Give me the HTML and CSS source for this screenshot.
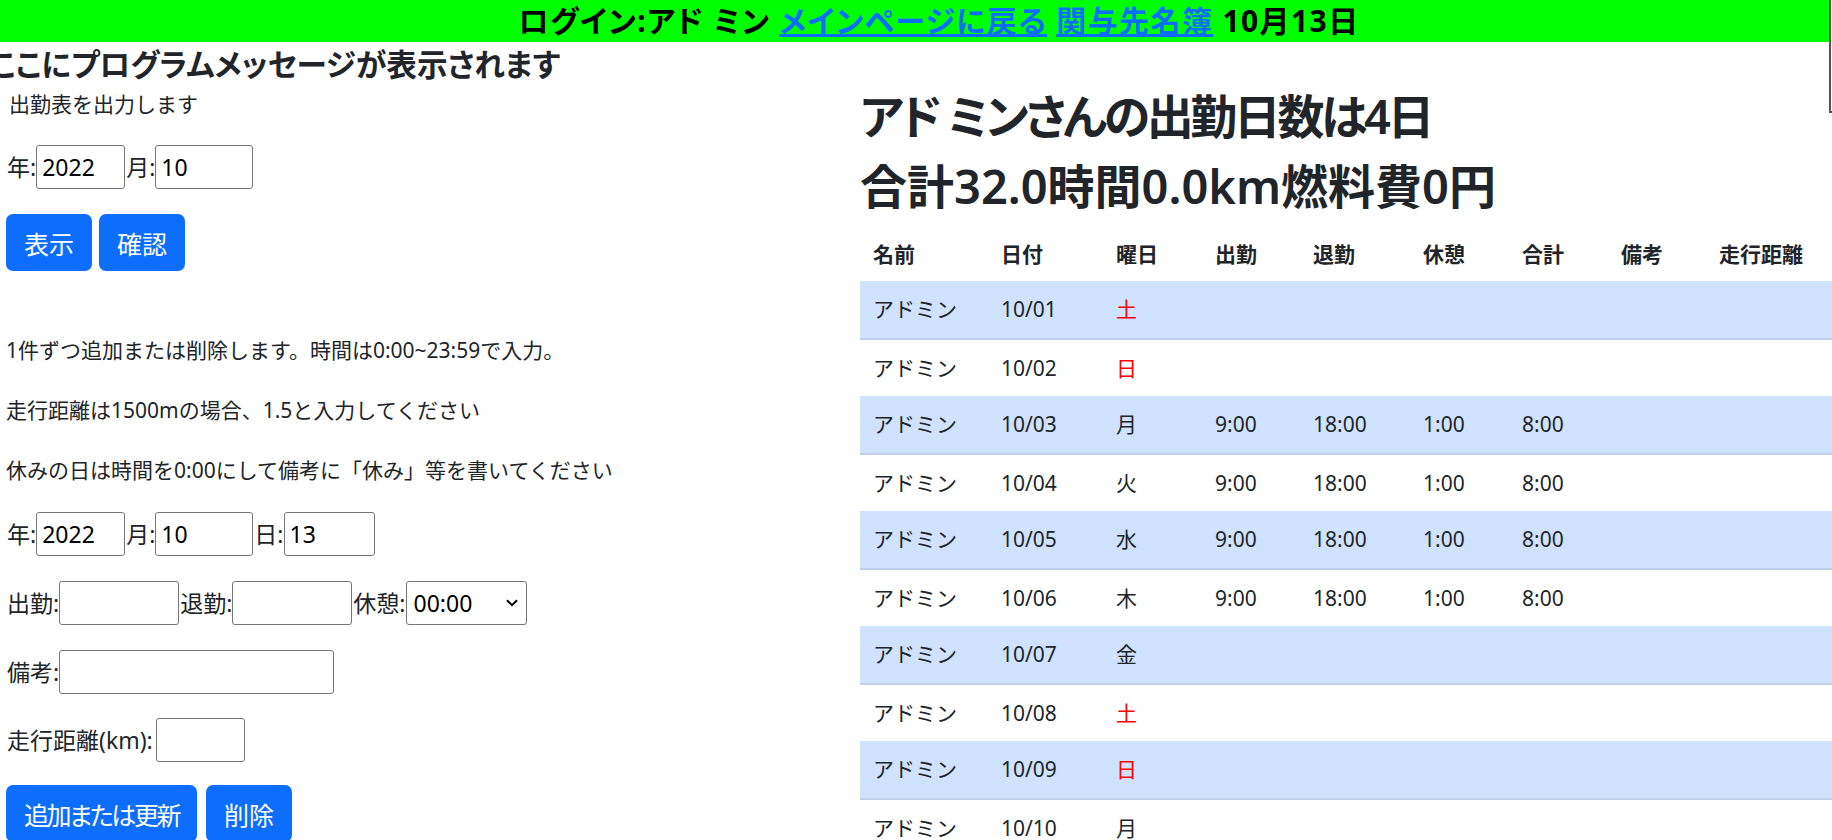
FILE: index.html
```html
<!DOCTYPE html>
<html lang="ja">
<head>
<meta charset="utf-8">
<title>出勤表</title>
<link rel="stylesheet" href="styles.css">
</head>
<body>
<div class="topbar">ログイン:アド ミン <a href="#">メインページに戻る</a> <a href="#">関与先名簿</a> 10月13日</div>
<div class="corner"></div>
<div class="page">
  <div class="left">
    <h4 class="msg">ここにプログラムメッセージが表示されます</h4>
    <div class="intro">出勤表を出力します</div>
    <div class="frow r1"><span class="lbl">年:</span><input class="w89" value="2022"><span class="lbl">月:</span><input class="w98" value="10"></div>
    <div class="btns"><button class="btn">表示</button><button class="btn">確認</button></div>
    <div class="notes">
      <p>1件ずつ追加または削除します。時間は0:00~23:59で入力。</p>
      <p>走行距離は1500mの場合、1.5と入力してください</p>
      <p>休みの日は時間を0:00にして備考に「休み」等を書いてください</p>
    </div>
    <div class="frow r-date"><span class="lbl">年:</span><input class="w89" value="2022"><span class="lbl">月:</span><input class="w98" value="10"><span class="lbl">日:</span><input class="w91" value="13"></div>
    <div class="frow"><span class="lbl">出勤:</span><input class="w120" value=""><span class="lbl">退勤:</span><input class="w120" value=""><span class="lbl">休憩:</span><span class="sel"><select><option>00:00</option></select><svg class="chev" viewBox="0 0 12 8"><path d="M1 1.2 L6 6.2 L11 1.2"/></svg></span></div>
    <div class="frow"><span class="lbl">備考:</span><input class="w275" value=""></div>
    <div class="frow r-km"><span class="lbl lbl-km">走行距離(km):</span><input class="w89" value=""></div>
    <div class="btns b2"><button class="btn btn-tight">追加または更新</button><button class="btn">削除</button></div>
  </div>
  <div class="right">
    <h1 class="big big-kana">アド ミンさんの出勤日数は4日</h1>
    <h1 class="big">合計32.0時間0.0km燃料費0円</h1>
    <table class="att">
      <thead>
        <tr><th>名前</th><th>日付</th><th>曜日</th><th>出勤</th><th>退勤</th><th>休憩</th><th>合計</th><th>備考</th><th>走行距離</th></tr>
      </thead>
      <tbody>
        <tr><td>アドミン</td><td>10/01</td><td class="hol">土</td><td></td><td></td><td></td><td></td><td></td><td></td></tr>
        <tr><td>アドミン</td><td>10/02</td><td class="hol">日</td><td></td><td></td><td></td><td></td><td></td><td></td></tr>
        <tr><td>アドミン</td><td>10/03</td><td>月</td><td>9:00</td><td>18:00</td><td>1:00</td><td>8:00</td><td></td><td></td></tr>
        <tr><td>アドミン</td><td>10/04</td><td>火</td><td>9:00</td><td>18:00</td><td>1:00</td><td>8:00</td><td></td><td></td></tr>
        <tr><td>アドミン</td><td>10/05</td><td>水</td><td>9:00</td><td>18:00</td><td>1:00</td><td>8:00</td><td></td><td></td></tr>
        <tr><td>アドミン</td><td>10/06</td><td>木</td><td>9:00</td><td>18:00</td><td>1:00</td><td>8:00</td><td></td><td></td></tr>
        <tr><td>アドミン</td><td>10/07</td><td>金</td><td></td><td></td><td></td><td></td><td></td><td></td></tr>
        <tr><td>アドミン</td><td>10/08</td><td class="hol">土</td><td></td><td></td><td></td><td></td><td></td><td></td></tr>
        <tr><td>アドミン</td><td>10/09</td><td class="hol">日</td><td></td><td></td><td></td><td></td><td></td><td></td></tr>
        <tr><td>アドミン</td><td>10/10</td><td>月</td><td></td><td></td><td></td><td></td><td></td><td></td></tr>
      </tbody>
    </table>
  </div>
</div>
</body>
</html>
```
FILE: styles.css
```css
html, body {
  margin: 0;
  padding: 0;
}
body {
  font-family: "Noto Sans", "Noto Sans CJK JP", sans-serif;
  font-size: 21px;
  line-height: 30px;
  color: #212529;
  background: #fff;
  overflow: hidden;
  position: relative;
}
.topbar {
  background: #00ff00;
  height: 42px;
  line-height: 42px;
  text-align: center;
  font-size: 30px;
  font-weight: 700;
  color: #000;
  padding-left: 46px;
  letter-spacing: 1.4px;
  white-space: nowrap;
  font-feature-settings: "palt";
}
.topbar a {
  color: #0d6efd;
  text-decoration: underline;
}
.corner {
  position: absolute;
  left: 1829px;
  top: 0;
  width: 20px;
  height: 111px;
  border-left: 2px solid #555;
  border-bottom: 2px solid #555;
  background: rgba(255, 255, 255, 0.8);
}
.page {
  display: flex;
  align-items: flex-start;
}
.left {
  width: 860px;
  flex: none;
  padding-left: 6px;
  box-sizing: border-box;
}
.right {
  flex: 1;
  min-width: 0;
  padding-top: 44px;
}
.msg {
  margin: 4px 0 0 -16px;
  font-size: 30.6px;
  line-height: 36px;
  font-weight: 600;
  white-space: nowrap;
  font-feature-settings: "palt";
}
.intro {
  margin-top: 7px;
  padding-left: 3px;
}
.frow {
  display: flex;
  align-items: center;
  height: 44px;
  margin-top: 25px;
  white-space: nowrap;
  font-size: 23px;
}
.r1 { margin-top: 26px; }
.r-date { margin-top: 27px; }
.r-km { margin-top: 24px; }
.lbl {
  display: inline-block;
  padding: 0 0 0 1px;
}
.lbl-km {
  padding-right: 3px;
}
.frow input,
.frow select {
  height: 44px;
  box-sizing: border-box;
  border: 1px solid #767676;
  border-radius: 3px;
  font-family: "Noto Sans", sans-serif;
  font-size: 23px;
  padding: 0 5px;
  color: #000;
  background: #fff;
  margin: 0;
  outline: none;
}
.w89 { width: 89px; }
.w91 { width: 91px; }
.w98 { width: 98px; }
.w120 { width: 120px; }
.w275 { width: 275px; }
.sel {
  position: relative;
  display: inline-block;
  height: 44px;
}
.sel select {
  appearance: none;
  -webkit-appearance: none;
  width: 121px;
  padding: 0 7px;
}
.chev {
  position: absolute;
  right: 9px;
  top: 18px;
  width: 12px;
  height: 8px;
  pointer-events: none;
}
.chev path {
  fill: none;
  stroke: #000;
  stroke-width: 2;
}
.btns {
  display: flex;
  gap: 7px;
  margin-top: 25px;
}
.b2 { margin-top: 23px; gap: 9px; }
.btn {
  height: 57px;
  padding: 0 18px;
  border: 0;
  border-radius: 7px;
  background: #0d6efd;
  color: #fff;
  font-family: "Noto Sans", "Noto Sans CJK JP", sans-serif;
  font-size: 25px;
  font-feature-settings: "palt";
}
.btn-tight {
  letter-spacing: -2.4px;
}
.notes {
  margin-top: 64px;
}
.notes p {
  margin: 0 0 30px;
  white-space: nowrap;
}
.notes p:last-child { margin-bottom: 0; }

.big {
  margin: 0 0 10px;
  font-size: 47px;
  line-height: 60px;
  font-weight: 600;
  white-space: nowrap;
  font-feature-settings: "palt";
}
.big-kana {
  letter-spacing: -3.4px;
}
.att {
  border-collapse: collapse;
  table-layout: fixed;
  width: 972px;
}
.att th,
.att td {
  padding: 0 13px;
  text-align: left;
  white-space: nowrap;
  box-sizing: border-box;
}
.att thead tr { height: 55px; }
.att th { font-weight: 700; }
.att tbody tr { height: 57.5px; }
.att tbody tr:nth-child(odd) { background: #cfe2ff; }
.att tbody tr:nth-child(odd) td { border-bottom: 2px solid #bfcfe9; }
.att th:nth-child(1) { width: 128px; }
.att th:nth-child(2) { width: 115px; }
.att th:nth-child(3) { width: 99px; }
.att th:nth-child(4) { width: 98px; }
.att th:nth-child(5) { width: 110px; }
.att th:nth-child(6) { width: 99px; }
.att th:nth-child(7) { width: 99px; }
.att th:nth-child(8) { width: 98px; }
.att th:nth-child(9) { width: 126px; }
.hol { color: #ff0000; }
```
